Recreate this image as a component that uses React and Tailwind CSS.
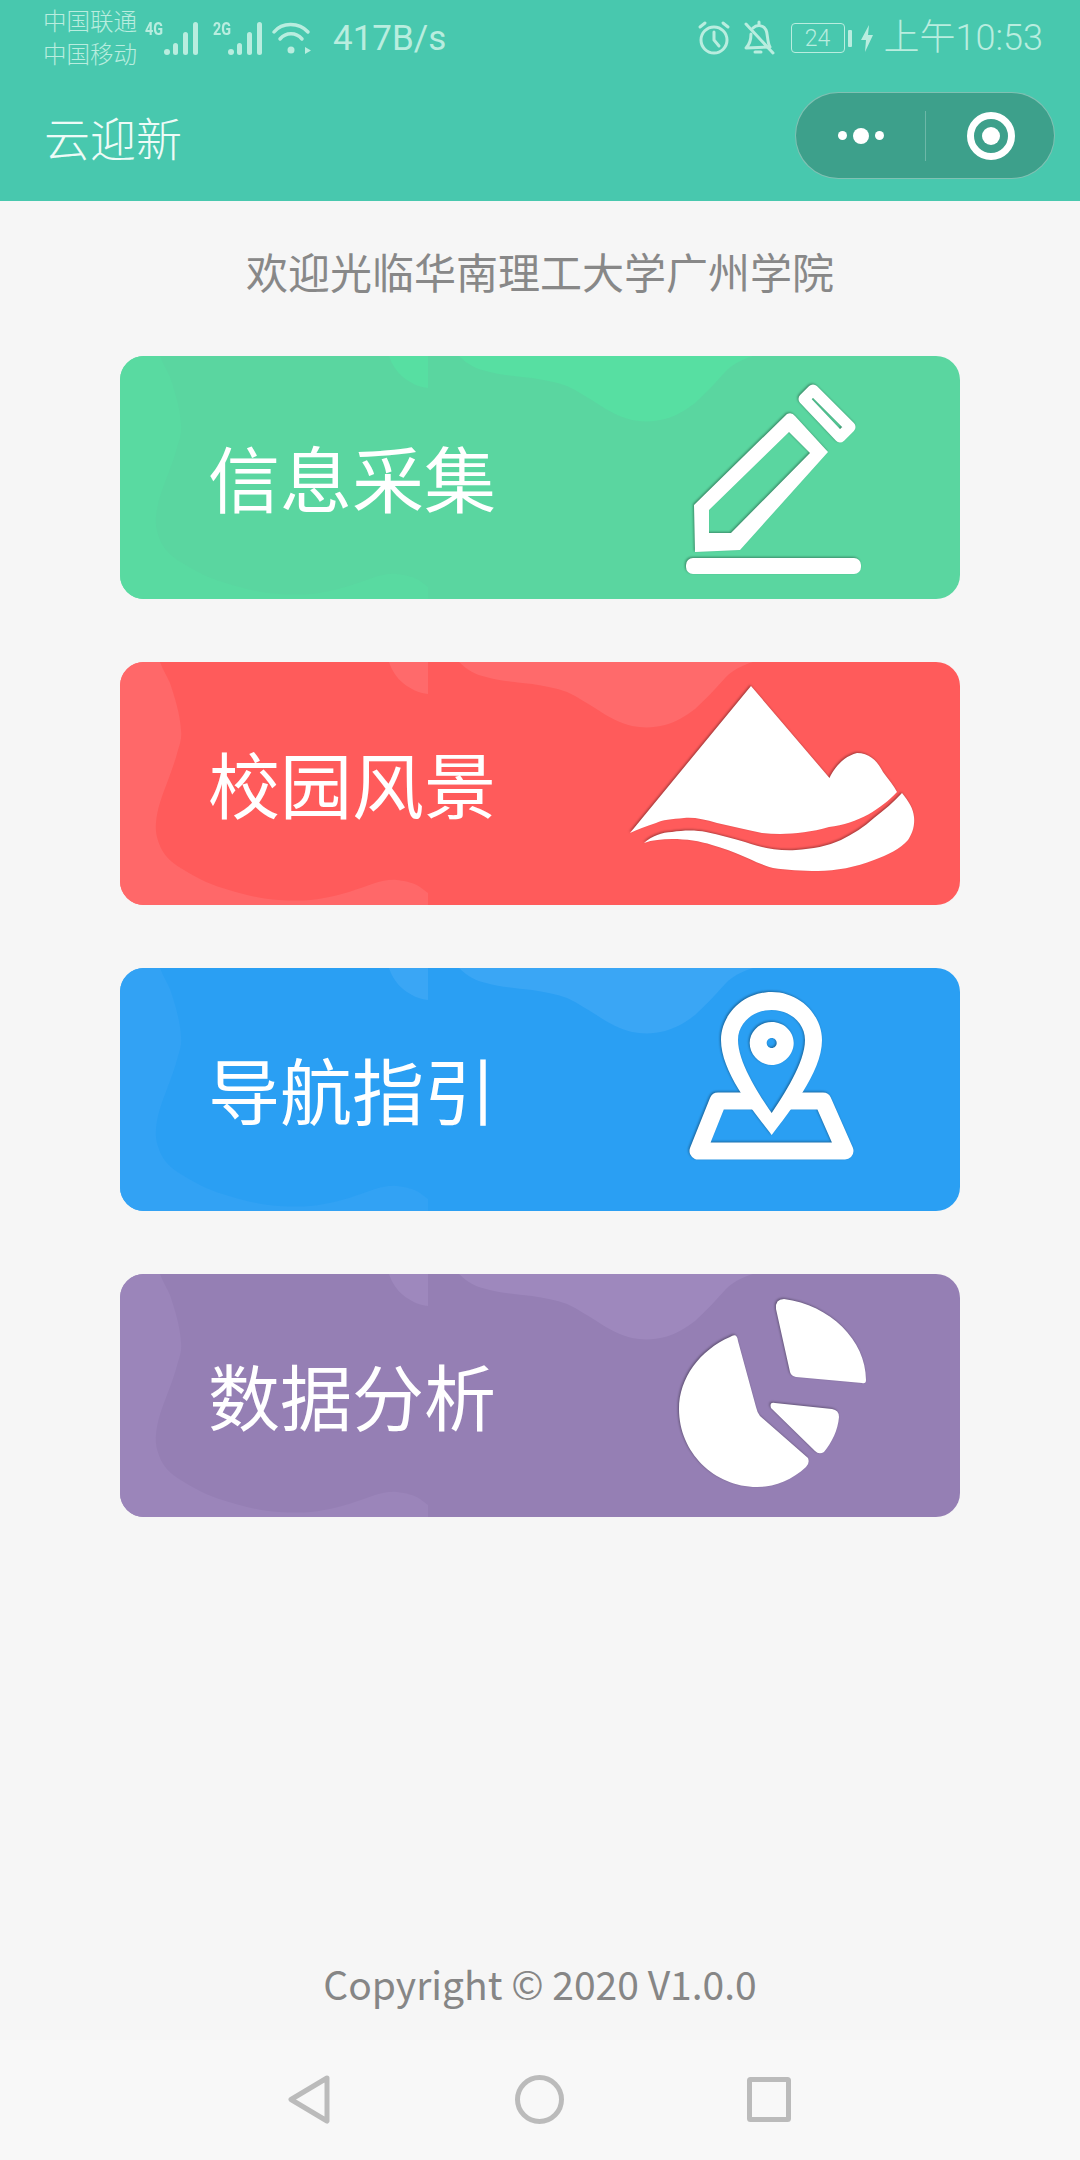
// App.jsx

import React from 'react';

const CJK = "font-['Noto_Sans_CJK_SC',sans-serif]";

// Wavy lighter shapes behind every card, in card coordinates (840x243)
const Blobs = ({ band, top }) => (
  <svg className="absolute inset-0" width="840" height="243" viewBox="0 0 840 243">
    <path
      className={band}
      d="M0 0 L40 0 C43 8 47 14 50 21 C55 36 60 52 61 68 C62 76 60 82 58 88 C55 100 51 110 47 121 C42 134 37 147 36 161 C35 171 38 180 42 188 C47 197 55 203 64 208 C78 217 94 224 109 228 C125 233 142 237 159 238 C175 239 190 239 204 236 C222 233 238 227 255 221 C262 219 270 217 277 218 C286 219 294 221 300 225 L308 231 L308 243 L0 243 Z"
    />
    <path className={top} d="M269 0 C272 9 277 16 283 21 C290 27 299 31 308 32 L308 0 Z" />
    <path
      className={top}
      d="M339 0 C347 8 356 13 366 15 C380 19 396 20 412 22 C424 24 436 26 447 30 C458 35 468 42 478 48 C488 55 500 61 512 64 C522 66 534 66 545 63 C556 60 566 54 575 47 C586 37 596 26 606 15 C612 9 620 4 633 0 Z"
    />
  </svg>
);

const PencilIcon = () => (
  <g>
    <path
      fillRule="evenodd"
      d="M135 196 L134 149 L227 58 Q232 56 235 60 L268 96 L180 194 Z M149 177 L171 177 L250 97 L229 76 L149 154 Z"
    />
    <path d="M253 34 L244 43 L280 81 L290 71 Z" fill="none" stroke="#fff" strokeWidth="11" strokeLinejoin="round" />
    <rect x="126" y="202" width="175" height="16" rx="7" />
  </g>
);

const MountainIcon = () => (
  <g>
    <path d="M191 24 L269.5 116 C274 106 284 94 297 91 C310 91 318 100 323 110 C329 118 334 124 337 130 C322 146 298 162 269 165 C245 172 222 173 202 171 C186 168 172 164 157 161 C144 157 133 155 124 156 C112 157 102 158 96 161 C86 164 77 168 70 171 Z" />
    <path d="M84 181 C92 174 102 170 112 170 C124 168 136 168 146 170 C160 173 172 176 185 180 C202 186 218 189 236 188 C252 187 268 184 281 178 C293 172 304 165 314 156 C324 148 334 140 342 131 C349 140 353 146 354 155 C355 164 352 172 348 178 C340 187 328 193 314 198 C296 205 276 209 258 209 C242 209 226 208 213 206 C202 203 194 199 185 195 C174 190 163 186 152 183 C140 179 126 177 112 177 C102 177 92 178 84 181 Z" />
  </g>
);

const PinIcon = () => (
  <g>
    <path
      d="M195 133 L158 133 L138 183 L285 183 L263 133 L228 133"
      fill="none"
      stroke="#fff"
      strokeWidth="17"
      strokeLinejoin="round"
    />
    <path
      fillRule="evenodd"
      d="M211.7 24 C183 24 161 47 161 72 C161 105 195 145 211.7 167 C228 145 262 105 262 72 C262 47 240 24 211.7 24 Z M211.7 42 C193 42 178 55 178 72 C178 95 200 128 211.7 145 C223 128 245 95 245 72 C245 55 230 42 211.7 42 Z"
    />
    <path
      fillRule="evenodd"
      d="M211.7 54 C199.5 54 189.7 63.5 189.7 75 C189.7 86.5 199.5 97 211.7 97 C223.9 97 233.7 86.5 233.7 75 C233.7 63.5 223.9 54 211.7 54 Z M211.7 70 C214.5 70 216.7 72.2 216.7 75 C216.7 77.8 214.5 80 211.7 80 C208.9 80 206.7 77.8 206.7 75 C206.7 72.2 208.9 70 211.7 70 Z"
    />
  </g>
);

const PieIcon = () => (
  <g>
    <path d="M170 63 Q177 58 178 67 L196 133 Q197 138 200 142 L248 184 Q250 189 246 193 C232 206 215 213 197 213 C154 213 119 178 119 135 C119 104 140 76 170 63 Z" />
    <path d="M216 35 Q215 25 224 25 C270 31 306 66 306 106 Q306 110 302 109 L236 103 Q231 102 230 98 Z" />
    <path d="M211 134 Q209 128 215 129 L272 135 Q279 136 279 143 C278 156 272 168 264 178 Q259 181 255 177 Z" />
  </g>
);

const cards = [
  { title: '信息采集', bg: 'bg-[#5ad6a0]', band: 'fill-[#59daa1]', top: 'fill-[#57dfa2]', Icon: PencilIcon },
  { title: '校园风景', bg: 'bg-[#ff5b5b]', band: 'fill-[#ff6869]', top: 'fill-[#ff6a6b]', Icon: MountainIcon },
  { title: '导航指引', bg: 'bg-[#2a9ff3]', band: 'fill-[#32a2f4]', top: 'fill-[#3aa6f5]', Icon: PinIcon },
  { title: '数据分析', bg: 'bg-[#957fb4]', band: 'fill-[#9b85ba]', top: 'fill-[#9e88bd]', Icon: PieIcon },
];

const Bars = () => (
  <svg width="36" height="36" viewBox="0 0 36 36" className="fill-[#b9eddf]">
    <circle cx="3" cy="31" r="3" />
    <rect x="9" y="22" width="5" height="12" rx="2.5" />
    <rect x="19" y="11" width="5" height="23" rx="2.5" />
    <rect x="29" y="1" width="5" height="33" rx="2.5" />
  </svg>
);

const StatusBar = () => (
  <div className="h-[76px] flex items-center justify-between pl-[43px] pr-[37px] text-[#b9eddf]">
    <div className="flex items-center">
      <div className={`${CJK} w-[95px] text-[23.5px] leading-[33px] font-light -mt-[2px]`}>
        <div>中国联通</div>
        <div>中国移动</div>
      </div>
      <span className="ml-[5px] mb-[18px] font-['Roboto',sans-serif] font-bold text-[18px] leading-none w-[19px] scale-x-[0.8]">4G</span>
      <div className="ml-[2px] mt-[2px]"><Bars /></div>
      <span className="ml-[11px] mb-[18px] font-['Roboto',sans-serif] font-bold text-[18px] leading-none w-[19px] scale-x-[0.8]">2G</span>
      <div className="-ml-[2px] mt-[2px]"><Bars /></div>
      <svg width="42" height="36" viewBox="0 0 40 36" className="ml-[7px] mt-[1px]" fill="none" stroke="#b9eddf" strokeLinecap="round">
        <path d="M2 11 C10 1 27 1 36 11" strokeWidth="3.5" />
        <path d="M8 18 C14 11 24 11 30 18" strokeWidth="3.5" />
        <circle cx="19" cy="29" r="3.5" fill="#b9eddf" stroke="none" />
        <path d="M33 26 L39 29.5 L33 33 Z" fill="#b9eddf" stroke="none" />
      </svg>
      <span className="ml-[20px] font-['Roboto',sans-serif] text-[35px] leading-none font-normal">417B/s</span>
    </div>
    <div className="flex items-center">
      <svg width="34" height="36" viewBox="0 0 34 36" fill="none" stroke="#b9eddf" strokeWidth="3" strokeLinecap="round">
        <circle cx="17" cy="20" r="13" />
        <path d="M17 12 L17 20 L22 26" />
        <path d="M3 7 L8 3" />
        <path d="M31 7 L26 3" />
      </svg>
      <svg width="32" height="36" viewBox="0 0 32 36" className="ml-[12px]" fill="none" stroke="#b9eddf" strokeWidth="3" strokeLinecap="round" strokeLinejoin="round">
        <path d="M10 8 C13 5 20 4 23 10 C25 14 24 22 27 27 L3 28 C7 24 8 18 8 14" />
        <path d="M12 32 L18 32" />
        <path d="M16 4 L16 2" />
        <path d="M3 4 L30 33" />
      </svg>
      <div className="ml-[16px] w-[54px] h-[30px] rounded-[4px] border-[1.5px] border-[#b9eddf] flex items-center justify-center font-['Roboto',sans-serif] font-light text-[23px] leading-none">24</div>
      <div className="ml-[3px] w-[4px] h-[17px] rounded-[1px] bg-[#b9eddf]" />
      <svg width="12" height="27" viewBox="0 0 12 27" className="ml-[9px] fill-[#b9eddf]">
        <path d="M8 0 L0 15 L5 15 L4 27 L12 10 L7 10 Z" />
      </svg>
      <span className="ml-[11px] font-['Roboto','Noto_Sans_CJK_SC',sans-serif] text-[36px] leading-none font-light">上午10:53</span>
    </div>
  </div>
);

const Capsule = () => (
  <div className="w-[260px] h-[87px] rounded-full bg-[#3da08b] border-[1.5px] border-white/35 flex items-center">
    <div className="w-[129px] flex items-center justify-center gap-[6px]">
      <span className="w-[9px] h-[9px] rounded-full bg-white" />
      <span className="w-[16px] h-[16px] rounded-full bg-white" />
      <span className="w-[9px] h-[9px] rounded-full bg-white" />
    </div>
    <div className="w-px h-[50px] bg-white/25" />
    <div className="flex-1 flex items-center justify-center pl-[2px]">
      <div className="w-[48px] h-[48px] rounded-full border-[7px] border-white flex items-center justify-center">
        <span className="w-[18px] h-[18px] rounded-full bg-white" />
      </div>
    </div>
  </div>
);

const App = () => {
  return (
    <div className={`${CJK} w-[1080px] h-[2160px] bg-[#f6f6f6] flex flex-col`}>
      <header className="h-[201px] bg-[#48c8ae] shrink-0">
        <StatusBar />
        <div className="flex items-center justify-between pl-[44px] pr-[25px] pt-[16px]">
          <h1 className="text-[46px] leading-none font-light text-[#eefbf7]">云迎新</h1>
          <Capsule />
        </div>
      </header>

      <main className="flex-1 flex flex-col items-center">
        <p className="mt-[49px] text-[42px] leading-none font-normal text-[#888888]">欢迎光临华南理工大学广州学院</p>
        <div className="mt-[64px] flex flex-col gap-[63px]">
          {cards.map((card) => (
            <div key={card.title} className={`relative w-[840px] h-[243px] rounded-[24px] overflow-hidden flex items-center justify-between ${card.bg}`}>
              <Blobs band={card.band} top={card.top} />
              <span className="relative ml-[88px] -mt-[4px] text-[72px] leading-none font-normal text-white">{card.title}</span>
              <svg
                width="400"
                height="243"
                viewBox="0 0 400 243"
                className="relative fill-white drop-shadow-[-1px_-1px_1px_rgba(0,0,0,0.35)]"
              >
                <card.Icon />
              </svg>
            </div>
          ))}
        </div>
        <p className="mt-auto mb-[37px] text-[39px] leading-[40px] font-normal text-[#868686]">Copyright © 2020 V1.0.0</p>
      </main>

      <nav className="h-[120px] shrink-0 bg-[#f8f8f8] flex items-center pl-[288px] pb-[1px]">
        <svg width="42" height="49" viewBox="0 0 42 49" fill="none" stroke="#bbbbbb" strokeWidth="5" strokeLinejoin="round">
          <path d="M39 3 L3 24.5 L39 46 Z" />
        </svg>
        <svg width="49" height="49" viewBox="0 0 49 49" className="ml-[185px]" fill="none" stroke="#bbbbbb" strokeWidth="5">
          <circle cx="24.5" cy="24.5" r="22" />
        </svg>
        <svg width="44" height="45" viewBox="0 0 44 45" className="ml-[183px]" fill="none" stroke="#bbbbbb" strokeWidth="5" strokeLinejoin="round">
          <rect x="2.5" y="2.5" width="39" height="40" rx="1" />
        </svg>
      </nav>
    </div>
  );
};

export default App;
